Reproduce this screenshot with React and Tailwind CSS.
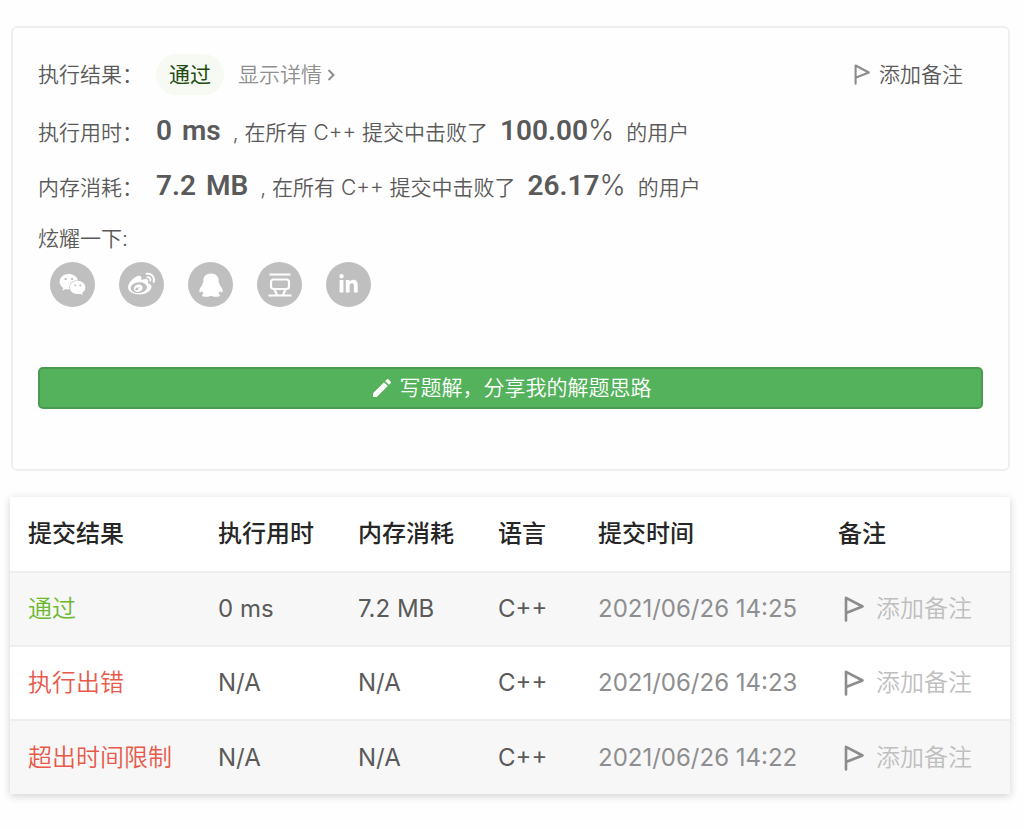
import React from 'react';
import { FaWeixin, FaWeibo, FaLinkedinIn } from 'react-icons/fa';
import { MdEdit } from 'react-icons/md';

function Penguin({ className }) {
  return (
    <svg viewBox="0 0 24 24" fill="currentColor" className={className} aria-hidden="true">
      <path d="M12 .4C7.200.4 4.300 3.600 4.300 7.400V9.400C3.400 10.300 3.300 11.200 3.200 12.200C1.300 14.200.2 16.400.3 18.300C.4 19.900 1.500 19.700 2.900 17.900C3.300 19 3.900 19.900 4.700 20.700C3.500 21.100 2.900 21.700 3 22.300C3.200 23.700 5.500 23.900 7.400 23.800C9.400 23.700 11 23.200 12 22.700C13 23.200 14.600 23.700 16.600 23.800C18.500 23.900 20.800 23.700 21 22.300C21.100 21.700 20.500 21.100 19.300 20.700C20.100 19.900 20.700 19 21.100 17.900C22.500 19.700 23.600 19.900 23.700 18.300C23.800 16.400 22.700 14.200 20.800 12.200C20.700 11.200 20.600 10.300 19.700 9.400V7.400C19.700 3.600 16.800.4 12 .4Z" />
    </svg>
  );
}

function Douban({ className }) {
  return (
    <svg viewBox="0 0 24 24" fill="none" stroke="currentColor" strokeWidth="2.2" className={className} aria-hidden="true">
      <path d="M1.500 1.500H22.500M.5 22.500H23.500M6.500 16.500L9 22M17.500 16.500L15 22" />
      <rect x="3" y="6.500" width="18" height="9.500" rx="2.500" />
    </svg>
  );
}

const shares = [
  { name: '微信', Icon: FaWeixin, size: 'size-[27px]' },
  { name: '微博', Icon: FaWeibo, size: 'size-[27px]' },
  { name: 'QQ', Icon: Penguin, size: 'size-6' },
  { name: '豆瓣', Icon: Douban, size: 'size-6' },
  { name: 'LinkedIn', Icon: FaLinkedinIn, size: 'size-[21px]' },
];

const columns = [
  { title: '提交结果', width: 'w-[19%]' },
  { title: '执行用时', width: 'w-[14%]' },
  { title: '内存消耗', width: 'w-[14%]' },
  { title: '语言', width: 'w-[10%]' },
  { title: '提交时间', width: 'w-[24%]' },
  { title: '备注', width: 'w-[19%]' },
];

const submissions = [
  { status: '通过', ok: true, runtime: '0 ms', memory: '7.2 MB', time: '2021/06/26 14:25' },
  { status: '执行出错', ok: false, runtime: 'N/A', memory: 'N/A', time: '2021/06/26 14:23' },
  { status: '超出时间限制', ok: false, runtime: 'N/A', memory: 'N/A', time: '2021/06/26 14:22' },
];

function Flag({ className }) {
  return (
    <svg viewBox="0 0 20 26" fill="none" stroke="currentColor" strokeWidth="2.6" strokeLinejoin="round" strokeLinecap="round" className={className} aria-hidden="true">
      <path d="M2 24.5V1.8L18.500 10.5L2 17" />
    </svg>
  );
}

function Stat({ label, value, unit, percent }) {
  return (
    <div className="flex h-[55px] items-baseline">
      <span className="w-[118px] shrink-0">{label}：</span>
      <span className="flex items-baseline gap-[10px] font-['Roboto',sans-serif] text-[28px] leading-[55px] font-semibold">
        <span>{value}</span>
        <span>{unit}</span>
      </span>
      <span className="ml-3 whitespace-pre">, 在所有 C++ 提交中击败了</span>
      <span className="ml-3 font-['Roboto',sans-serif] text-[28px] leading-[55px] font-semibold">
        {percent}
        <span className="font-['Inter',sans-serif] font-light">%</span>
      </span>
      <span className="ml-3">的用户</span>
    </div>
  );
}

export default function App() {
  return (
    <main className="min-h-screen bg-[#fefefe] pt-[26px] pr-[14px] pb-8 pl-[10px] font-['Inter','Noto_Sans_CJK_SC',sans-serif] text-[#5a5a5a]">
      <section className="ml-px rounded-md border-2 border-[#efefef] px-[25px] pt-[26px] pb-[60px] text-[21px] font-[350] leading-8">
        <div className="flex items-center">
          <span className="w-[118px] shrink-0">执行结果：</span>
          <span className="rounded-full bg-[#f6faf3] px-[13px] py-1 leading-[33px] font-normal text-[#234a10]">通过</span>
          <a href="#detail" className="ml-[14px] flex items-center gap-1 text-[#8f8f8f]">
            显示详情
            <svg viewBox="0 0 8 12" fill="none" stroke="currentColor" strokeWidth="2" className="ml-px h-3 w-2" aria-hidden="true">
              <path d="M1.5 1L6.5 6L1.5 11" />
            </svg>
          </a>
          <button type="button" className="mr-5 ml-auto flex items-center gap-[9px]">
            <Flag className="h-[21px] w-4 text-[#8c8c8c]" />
            添加备注
          </button>
        </div>
        <div className="mt-2">
          <Stat label="执行用时" value="0" unit="ms" percent="100.00" />
          <Stat label="内存消耗" value="7.2" unit="MB" percent="26.17" />
        </div>
        <p className="mt-[10px]">炫耀一下:</p>
        <div className="mt-[7px] ml-3 flex gap-6">
          {shares.map(({ name, Icon, size }) => (
            <button key={name} type="button" aria-label={name} className="flex size-[45px] items-center justify-center rounded-full bg-[#bfbfbf] text-white">
              <Icon className={size} />
            </button>
          ))}
        </div>
        <button type="button" className="mt-[60px] flex h-[42px] w-full items-center justify-center gap-[6px] rounded-[5px] border-2 border-[#4a9a51] bg-[#54b25c] text-white">
          <MdEdit className="size-6" />
          写题解，分享我的解题思路
        </button>
      </section>

      <table className="mt-[26px] w-full table-fixed border-collapse bg-white text-left text-2xl shadow-[0_2px_8px_rgba(0,0,0,0.18)]">
        <thead>
          <tr className="h-[75px] text-[#262626]">
            {columns.map((c) => (
              <th key={c.title} className={`${c.width} px-[18px] font-medium whitespace-nowrap`}>{c.title}</th>
            ))}
          </tr>
        </thead>
        <tbody>
          {submissions.map((s) => (
            <tr key={s.time} className="h-[74px] border-t-2 border-[#eeeeee] whitespace-nowrap odd:bg-[#f7f7f7]">
              <td className="px-[18px] font-[350]">
                <a href="#submission" className={s.ok ? 'text-[#6cb92f]' : 'text-[#e8594a]'}>{s.status}</a>
              </td>
              <td className="px-[18px]">{s.runtime}</td>
              <td className="px-[18px]">{s.memory}</td>
              <td className="px-[18px]">C++</td>
              <td className="px-[18px] text-[#8e8e90]">{s.time}</td>
              <td className="px-6 font-[350]">
                <button type="button" className="flex items-center gap-3 text-[#bfbfbf]">
                  <Flag className="h-[26px] w-5 shrink-0 text-[#8c8c8c]" />
                  添加备注
                </button>
              </td>
            </tr>
          ))}
        </tbody>
      </table>
    </main>
  );
}
